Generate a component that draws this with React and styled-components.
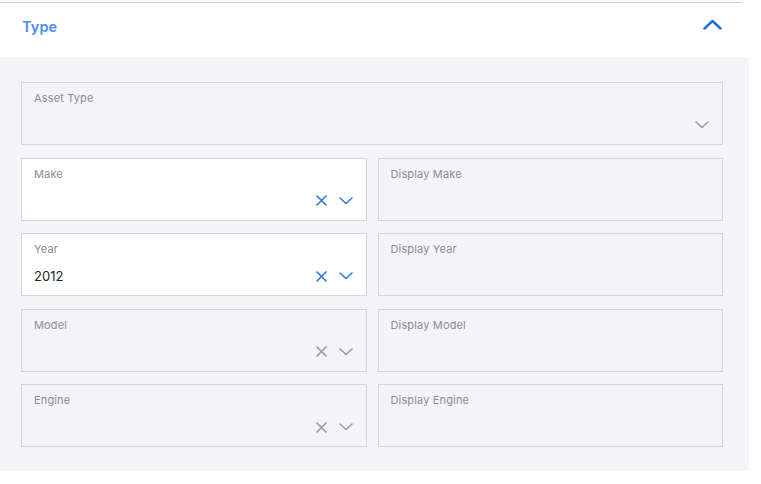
import React from 'react'
import styled, { createGlobalStyle } from 'styled-components'

const GlobalStyle = createGlobalStyle`
  html, body {
    margin: 0;
    padding: 0;
    background: #ffffff;
    font-family: Inter, "Noto Sans", sans-serif;
  }
`

const fields = [
  [{ label: 'Asset Type', select: true, clear: false, disabled: true, wide: true }],
  [
    { label: 'Make', select: true, clear: true, disabled: false },
    { label: 'Display Make', disabled: true },
  ],
  [
    { label: 'Year', value: '2012', select: true, clear: true, disabled: false },
    { label: 'Display Year', disabled: true },
  ],
  [
    { label: 'Model', select: true, clear: true, disabled: true },
    { label: 'Display Model', disabled: true },
  ],
  [
    { label: 'Engine', select: true, clear: true, disabled: true },
    { label: 'Display Engine', disabled: true },
  ],
]

const ChevronDown = ({ color }) => (
  <svg width='14' height='8' viewBox='0 0 14 8' fill='none'>
    <path d='M1 1l6 5.5L13 1' stroke={color} strokeWidth='1.6' strokeLinecap='round' strokeLinejoin='round' />
  </svg>
)

const Cross = ({ color }) => (
  <svg width='11' height='11' viewBox='0 0 11 11' fill='none'>
    <path d='M1 1l9 9M10 1l-9 9' stroke={color} strokeWidth='1.7' strokeLinecap='round' />
  </svg>
)

const Field = ({ label, value, select, clear, disabled, wide }) => {
  const iconColor = disabled ? '#9a9ca3' : '#2f7de1'
  return (
    <Box $disabled={disabled} $wide={wide}>
      <Label>{label}</Label>
      <ValueRow>
        <Value>{value}</Value>
        <Icons>
          {clear && <Cross color={iconColor} />}
          {select && <ChevronDown color={iconColor} />}
        </Icons>
      </ValueRow>
    </Box>
  )
}

const App = () => {
  return (
    <>
      <GlobalStyle />
      <Wrapper>
        <Header>
          <Title>Type</Title>
          <Toggle width='19' height='11' viewBox='0 0 19 11' fill='none'>
            <path d='M1.5 9.5l8-7.5 8 7.5' stroke='#1f6fe0' strokeWidth='2.4' strokeLinecap='round' strokeLinejoin='round' />
          </Toggle>
        </Header>
        <Panel>
          {fields.map((row, i) => (
            <Row key={i} $single={row.length === 1}>
              {row.map((f) => (
                <Field key={f.label} {...f} />
              ))}
            </Row>
          ))}
        </Panel>
      </Wrapper>
    </>
  )
}

const Wrapper = styled.div`
  padding-top: 2px;
`

const Header = styled.div`
  width: 742px;
  height: 55px;
  box-sizing: border-box;
  border-top: 1px solid #c9cdd5;
  display: flex;
  align-items: center;
  justify-content: space-between;
  padding: 0 20px 8px 22px;
`

const Title = styled.div`
  font-size: 14.5px;
  font-weight: 600;
  color: #4a8af4;
  letter-spacing: 0.1px;
`

const Toggle = styled.svg`
  margin-bottom: 4px;
`

const Panel = styled.div`
  width: 749px;
  box-sizing: border-box;
  background: #f5f5f9;
  padding: 25px 26px 24px 21px;
  display: flex;
  flex-direction: column;
  gap: 12.5px;
`

const Row = styled.div`
  display: grid;
  grid-template-columns: ${(p) => (p.$single ? '1fr' : '1fr 1fr')};
  gap: 11px;
`

const Box = styled.div`
  height: 63px;
  box-sizing: border-box;
  border: 1px solid #d2d5dd;
  background: ${(p) => (p.$disabled ? '#f4f4f8' : '#ffffff')};
  padding: 8px 13px 0 12px;
  display: flex;
  flex-direction: column;
`

const Label = styled.div`
  font-size: 11px;
  line-height: 14px;
  color: #8a8c93;
  letter-spacing: 0.15px;
`

const ValueRow = styled.div`
  margin-top: 10px;
  height: 20px;
  display: flex;
  align-items: center;
  justify-content: space-between;
`

const Value = styled.div`
  font-size: 13px;
  color: #222326;
`

const Icons = styled.div`
  display: flex;
  align-items: center;
  gap: 12px;
`

export default App
